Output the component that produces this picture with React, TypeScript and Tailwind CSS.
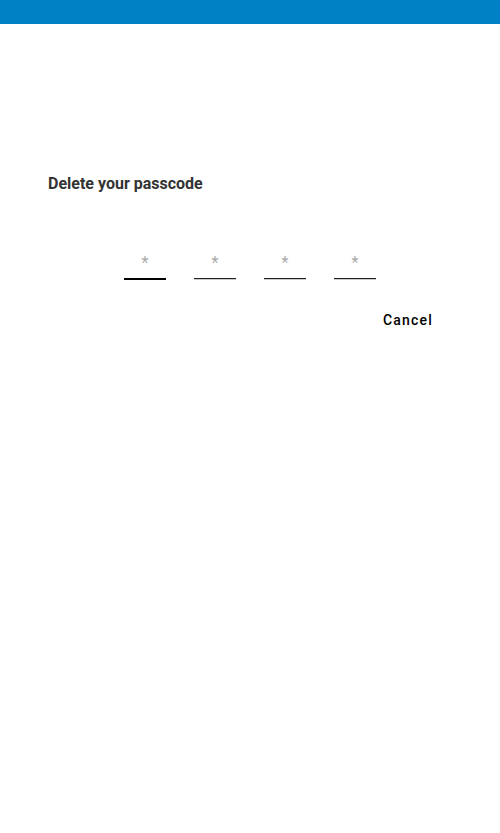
import React from "react";

export default function App() {
  const cells = [0, 1, 2, 3];
  return (
    <div className="w-[500px] h-[833px] bg-white" style={{ fontFamily: "Roboto, 'Liberation Sans', sans-serif" }}>
      <div className="h-[24px] bg-[#0081c6]" />
      <div className="pt-[150px] px-[48px]">
        <div className="text-[16px] leading-[20px] font-bold text-[#333333]">Delete your passcode</div>
      </div>
      <div className="mt-[54px] flex justify-center gap-[28px]">
        {cells.map((i) => (
          <div key={i} className="w-[42px] flex flex-col items-center">
            <div className="h-[22px] pt-[4px] text-[16px] leading-[22px] text-[#a8a8a8]">*</div>
            <div className={i === 0 ? "mt-[8px] w-full h-[2px] bg-black" : "mt-[8px] w-full h-[1px] bg-[#222222] border-b border-[#c8c8c8] box-content"} />
          </div>
        ))}
      </div>
      <div className="mt-[32px] flex justify-end pr-[67px]">
        <div className="text-[14px] leading-[16px] font-medium tracking-[1.2px] text-black">Cancel</div>
      </div>
    </div>
  );
}
